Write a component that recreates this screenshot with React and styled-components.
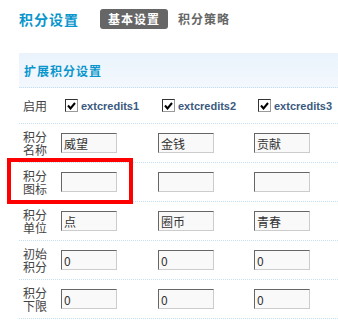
import React from "react";
import styled, { createGlobalStyle } from "styled-components";

const GlobalStyle = createGlobalStyle`
  html, body { margin: 0; padding: 0; background: #fff; }
  body { font-family: "Noto Sans CJK SC", "Liberation Sans", sans-serif; font-size: 12px; color: #333; }
`;

const Page = styled.div`
  padding: 9px 0 0 19px;
  width: 319px;
`;

const TitleBar = styled.div`
  display: flex;
  align-items: center;
  height: 20px;
`;

const Title = styled.h3`
  margin: 0;
  font-size: 14px;
  font-weight: bold;
  letter-spacing: 1px;
  color: #0a96cc;
  line-height: 20px;
`;

const Tabs = styled.div`
  display: flex;
  align-items: center;
  margin-left: 21px;
  gap: 10px;
`;

const Tab = styled.span`
  display: inline-block;
  height: 20px;
  line-height: 20px;
  padding: 0 ${(p) => (p.$active ? "8px" : "0")};
  border-radius: 3px;
  font-size: 12px;
  font-weight: bold;
  letter-spacing: 1px;
  background: ${(p) => (p.$active ? "#666" : "transparent")};
  color: ${(p) => (p.$active ? "#fff" : "#666")};
`;

const Section = styled.div`
  margin-top: 24px;
`;

const SectionHead = styled.div`
  height: 34px;
  display: flex;
  align-items: center;
  padding-left: 5px;
  background: linear-gradient(#eaf3fc, #f3f8fd);
  border-bottom: 1px dotted #c4def2;
  color: #0a96cc;
  font-weight: bold;
  font-size: 12px;
  letter-spacing: 1px;
`;

const Row = styled.div`
  position: relative;
  display: grid;
  grid-template-columns: 42px 97px 96px 1fr;
  align-items: center;
  height: ${(p) => (p.$short ? "35px" : "38px")};
  border-bottom: 1px dotted #c4def2;
`;

const Label = styled.div`
  padding-left: 4px;
  font-size: 12px;
  color: #444;
`;

const LabelLine = styled.div`
  line-height: 13px;
  height: 13px;
`;

const Cell = styled.div`
  display: flex;
  align-items: center;
`;

const Box = styled.span`
  box-sizing: border-box;
  width: 13px;
  height: 13px;
  margin: 0 3px 0 4px;
  border: 1px solid;
  border-color: #333 #9a9a9a #9a9a9a #333;
  background: #fff;
  display: flex;
  align-items: center;
  justify-content: center;
`;

const CheckText = styled.span`
  font-family: "Liberation Sans", Arial, sans-serif;
  font-size: 11px;
  font-weight: bold;
  color: #3a5a80;
`;

const Field = styled.input`
  box-sizing: border-box;
  width: 56px;
  height: 20px;
  margin: 0;
  padding: 0 2px;
  border: 1px solid;
  border-color: #666 #ccc #ccc #666;
  background: #f9f9f9;
  font-family: "Noto Sans CJK SC", "DejaVu Sans", sans-serif;
  font-size: 12px;
  color: #333;
  outline: none;
`;

const Highlight = styled.div`
  position: absolute;
  left: -12px;
  top: -5px;
  width: 126px;
  height: 46px;
  box-sizing: border-box;
  border: 4px solid #f00;
  pointer-events: none;
`;

const Check = () => (
  <svg width="9" height="8" viewBox="0 0 9 8">
    <path d="M1 3.5 L3.5 6.5 L8 1" fill="none" stroke="#000" strokeWidth="2" />
  </svg>
);

const rows = [
  { label: ["积分", "名称"], values: ["威望", "金钱", "贡献"] },
  { label: ["积分", "图标"], values: ["", "", ""], highlight: true },
  { label: ["积分", "单位"], values: ["点", "圈币", "青春"] },
  { label: ["初始", "积分"], values: ["0", "0", "0"] },
  { label: ["积分", "下限"], values: ["0", "0", "0"] },
];

export default function App() {
  return (
    <>
      <GlobalStyle />
      <Page>
        <TitleBar>
          <Title>积分设置</Title>
          <Tabs>
            <Tab $active>基本设置</Tab>
            <Tab>积分策略</Tab>
          </Tabs>
        </TitleBar>
        <Section>
          <SectionHead>扩展积分设置</SectionHead>
          <Row $short>
            <Label>启用</Label>
            {[1, 2, 3].map((n) => (
              <Cell key={n}>
                <Box>
                  <Check />
                </Box>
                <CheckText>extcredits{n}</CheckText>
              </Cell>
            ))}
          </Row>
          {rows.map((r, i) => (
            <Row key={i}>
              <Label>
                <LabelLine>{r.label[0]}</LabelLine>
                <LabelLine>{r.label[1]}</LabelLine>
              </Label>
              {r.values.map((v, j) => (
                <Cell key={j}>
                  <Field defaultValue={v} />
                </Cell>
              ))}
              {r.highlight && <Highlight />}
            </Row>
          ))}
        </Section>
      </Page>
    </>
  );
}
